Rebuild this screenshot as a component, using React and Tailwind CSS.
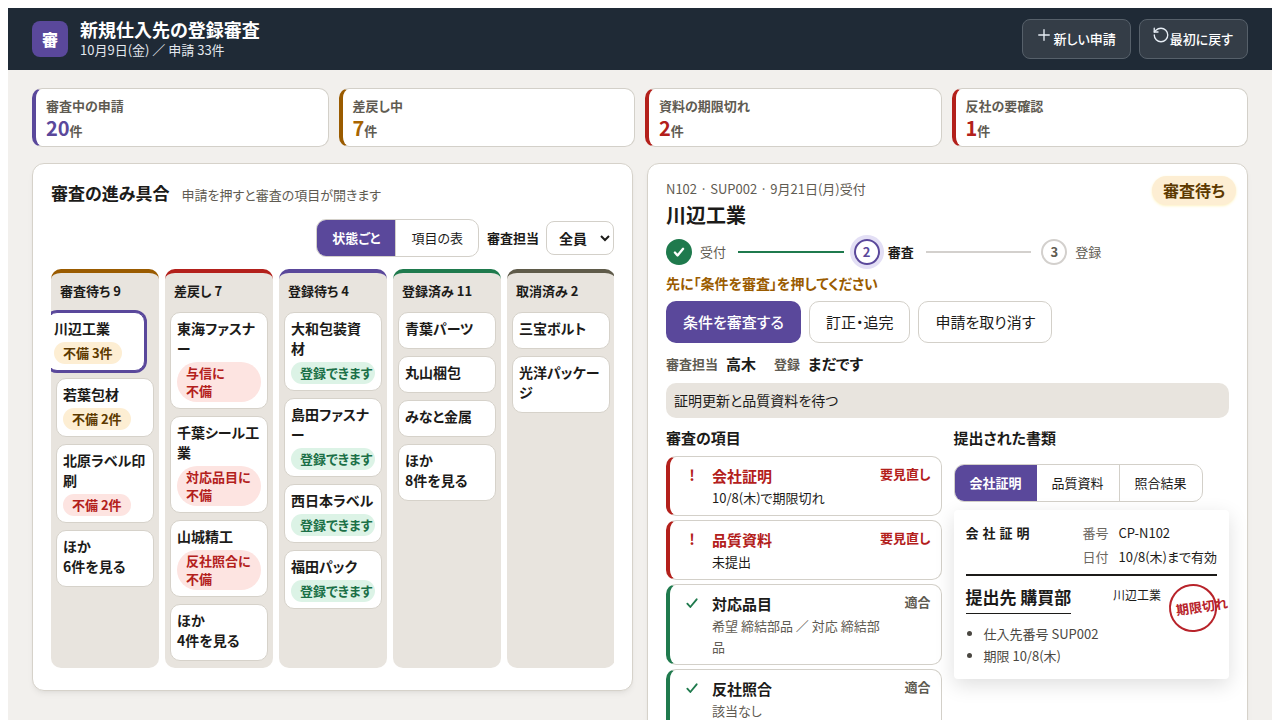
import React from "react";
import { Plus, RotateCcw } from "lucide-react";

const stats = [
  { label: "審査中の申請", value: 20, edge: "border-l-[#5a489b]", tone: "text-[#5a489b]" },
  { label: "差戻し中", value: 7, edge: "border-l-[#9a5b00]", tone: "text-[#a86400]" },
  { label: "資料の期限切れ", value: 2, edge: "border-l-[#b3201b]", tone: "text-[#b3201b]" },
  { label: "反社の要確認", value: 1, edge: "border-l-[#b3201b]", tone: "text-[#b3201b]" },
];

const columns = [
  {
    title: "審査待ち",
    count: 9,
    edge: "border-t-[#9a5b00]",
    cards: [
      { name: "川辺工業", tag: ["不備 3件"], tone: "amber", selected: true },
      { name: "若葉包材", tag: ["不備 2件"], tone: "amber" },
      { name: "北原ラベル印刷", tag: ["不備 2件"], tone: "red" },
      { more: 6 },
    ],
  },
  {
    title: "差戻し",
    count: 7,
    edge: "border-t-[#b3201b]",
    cards: [
      { name: "東海ファスナー", tag: ["与信に", "不備"], tone: "red" },
      { name: "千葉シール工業", tag: ["対応品目に", "不備"], tone: "red" },
      { name: "山城精工", tag: ["反社照合に", "不備"], tone: "red" },
      { more: 4 },
    ],
  },
  {
    title: "登録待ち",
    count: 4,
    edge: "border-t-[#5a489b]",
    cards: [
      { name: "大和包装資材", tag: ["登録できます"], tone: "green" },
      { name: "島田ファスナー", tag: ["登録できます"], tone: "green" },
      { name: "西日本ラベル", tag: ["登録できます"], tone: "green" },
      { name: "福田パック", tag: ["登録できます"], tone: "green" },
    ],
  },
  {
    title: "登録済み",
    count: 11,
    edge: "border-t-[#1f7a4d]",
    cards: [{ name: "青葉パーツ" }, { name: "丸山梱包" }, { name: "みなと金属" }, { more: 8 }],
  },
  {
    title: "取消済み",
    count: 2,
    edge: "border-t-[#5f5b4a]",
    cards: [{ name: "三宝ボルト" }, { name: "光洋パッケージ" }],
  },
];

const tagTones = {
  amber: "bg-[#fdeed3] text-[#5c3900]",
  red: "bg-[#fde4e1] text-[#b3201b]",
  green: "bg-[#dcf3e6] text-[#1b7047]",
};

const checks = [
  { name: "会社証明", note: "10/8(木)で期限切れ", ok: false },
  { name: "品質資料", note: "未提出", ok: false },
  { name: "対応品目", note: "希望 締結部品 ／ 対応 締結部品", ok: true },
  { name: "反社照合", note: "該当なし", ok: true },
];

function Tick({ className, strokeWidth }) {
  return (
    <svg
      viewBox="0 0 24 24"
      fill="none"
      stroke="currentColor"
      strokeWidth={strokeWidth}
      strokeLinecap="round"
      strokeLinejoin="round"
      className={className}
      aria-hidden="true"
    >
      <path d="M5 13l4.5 5L19 6.5" />
    </svg>
  );
}

function TopButton({ icon: Icon, children }) {
  return (
    <button
      type="button"
      className="flex h-10 items-center rounded-lg border border-[#56606a] bg-[#343d47] pr-[14px] pl-3 text-[13px] font-medium text-white"
    >
      <Icon size={18} strokeWidth={1.8} className="mb-2 text-[#e6edf5]" aria-hidden="true" />
      {children}
    </button>
  );
}

function Stat({ label, value, edge, tone }) {
  return (
    <div className={`rounded-[10px] border border-l-4 border-[#d3d0c9] bg-white px-[10px] py-[6px] ${edge}`}>
      <div className="text-[13px] leading-[21px] font-bold text-[#5f5b52]">{label}</div>
      <div className="flex h-6 items-baseline text-[13px] leading-6 font-bold text-[#5f5b52]">
        <span className={`text-[20px] leading-6 ${tone}`}>{value}</span>件
      </div>
    </div>
  );
}

function BoardCard({ card }) {
  const frame = card.selected
    ? "-ml-[9px] mr-[9px] border-[#5a489b] ring-2 ring-[#5a489b]"
    : "border-[#d6d2ca]";
  return (
    <button
      type="button"
      className={`block rounded-[10px] border bg-white px-[6px] pt-[5px] pb-[6px] text-left ${frame}`}
    >
      <span className="mb-1 block pr-px text-[14px] leading-5 font-bold break-all">
        {card.more ? (
          <>
            ほか
            <br />
            {card.more}件を見る
          </>
        ) : (
          card.name
        )}
      </span>
      {card.tag && (
        <span
          className={`block max-w-full rounded-[20px] px-[9px] py-[2px] text-[13px] leading-[18px] font-bold ${
            card.tag.length > 1 ? "w-full" : "w-fit"
          } ${tagTones[card.tone]}`}
        >
          {card.tag.map((part) => (
            <span key={part} className="block whitespace-nowrap">
              {part}
            </span>
          ))}
        </span>
      )}
    </button>
  );
}

function Board() {
  return (
    <section className="rounded-xl border border-[#d6d2ca] bg-white px-[18px] pt-[17px] pb-[22px] shadow-md shadow-black/5">
      <div className="flex items-baseline gap-3">
        <h2 className="text-[17px] leading-6 font-bold">審査の進み具合</h2>
        <p className="text-[13px] leading-6 text-[#5f5b52]">申請を押すと審査の項目が開きます</p>
      </div>
      <div className="mt-3 flex items-center justify-end">
        <div className="flex h-[38px] overflow-hidden rounded-[10px] border border-[#d3d0c9] text-[13px]">
          <button type="button" className="bg-[#5a489b] px-[15px] font-bold text-white">
            状態ごと
          </button>
          <button type="button" className="border-l border-[#d3d0c9] px-[15px]">
            項目の表
          </button>
        </div>
        <label htmlFor="owner" className="ml-2 text-[13px] font-bold">
          審査担当
        </label>
        <select
          id="owner"
          className="ml-[7px] h-[34px] w-[68px] rounded-lg border border-[#d3d0c9] bg-white pl-2 text-[14px] font-bold"
        >
          <option>全員</option>
        </select>
      </div>
      <div className="mt-3 grid grid-cols-[repeat(5,minmax(108px,1fr))] gap-[6px] overflow-hidden">
        {columns.map((col) => (
          <div
            key={col.title}
            className={`flex min-w-0 flex-col gap-[7px] rounded-[10px] border-t-4 bg-[#e8e4de] px-[5px] pb-[7px] ${col.edge}`}
          >
            <h3 className="px-1 pt-2 pb-1 text-[13px] leading-5 font-bold">
              {col.title} {col.count}
            </h3>
            {col.cards.map((card, i) => (
              <BoardCard key={i} card={card} />
            ))}
          </div>
        ))}
      </div>
    </section>
  );
}

function Step({ mark, label, circle, line, active }) {
  return (
    <li className="flex items-center">
      <span
        className={`flex size-[26px] shrink-0 items-center justify-center rounded-full border-2 text-[13px] leading-4 font-bold ${circle}`}
      >
        {mark}
      </span>
      <span className={`ml-2 text-[13px] leading-5 whitespace-nowrap ${active ? "font-bold" : "text-[#5f5b52]"}`}>
        {label}
      </span>
      {line && <span className={`mr-[10px] ml-3 h-[2px] flex-1 ${line}`} />}
    </li>
  );
}

function CheckRow({ name, note, ok }) {
  return (
    <li
      className={`flex rounded-[10px] border border-l-4 border-[#d3d0c9] bg-white py-[7px] pr-[10px] ${
        ok ? "border-l-[#1f7a4d]" : "border-l-[#b3201b]"
      }`}
    >
      <span className="flex h-[22px] w-[42px] shrink-0 items-center justify-center pl-[2px] text-[15px] font-bold text-[#b3201b]">
        {ok ? <Tick strokeWidth={2.8} className="size-4 text-[#1f7a4d]" /> : "!"}
      </span>
      <div className="min-w-0 flex-1 pr-5">
        <div className={`text-[15px] leading-[23px] font-bold ${ok ? "" : "text-[#b3201b]"}`}>{name}</div>
        <div className={`text-[13px] leading-[21px] ${ok ? "text-[#5f5b52]" : ""}`}>{note}</div>
      </div>
      <span className={`text-[13px] leading-5 font-bold ${ok ? "text-[#5f5b52]" : "text-[#b3201b]"}`}>
        {ok ? "適合" : "要見直し"}
      </span>
    </li>
  );
}

function Document() {
  return (
    <article className="mt-2 rounded-[4px] bg-white p-3 shadow-[0_6px_20px_rgba(0,0,0,0.13)]">
      <div className="flex justify-between border-b-2 border-[#1c1b19] pb-[6px]">
        <h4 className="text-[13px] leading-[22px] font-bold tracking-[4px]">会社証明</h4>
        <dl className="grid grid-cols-[auto_auto] gap-x-[10px] gap-y-[2px] text-[13px] leading-[22px]">
          <dt className="text-[#6b675f]">番号</dt>
          <dd>CP-N102</dd>
          <dt className="text-[#6b675f]">日付</dt>
          <dd>10/8(木)まで有効</dd>
        </dl>
      </div>
      <div className="mt-2 flex items-start">
        <p className="border-b border-[#1c1b19] pb-1 text-[17px] leading-[25px] font-bold">提出先 購買部</p>
        <p className="mr-2 ml-auto text-[12px] leading-[22px]">川辺工業</p>
        <div className="flex size-12 -rotate-8 items-center rounded-full border-2 border-[#b8232a] pl-[5px] text-[13px] font-bold whitespace-nowrap text-[#b8232a]">
          期限切れ
        </div>
      </div>
      <ul className="-mt-[9px] list-disc pl-[18px] text-[13px] leading-[22px] text-[#4a4741]">
        <li>仕入先番号 SUP002</li>
        <li>期限 10/8(木)</li>
      </ul>
    </article>
  );
}

function Detail() {
  return (
    <section className="relative rounded-xl border border-[#d6d2ca] bg-white px-[18px] pt-[14px] pb-6 shadow-md shadow-black/5">
      <span className="absolute top-3 right-[11px] rounded-full bg-[#fdeed3] px-[11px] text-[16px] leading-[29px] font-bold text-[#5c3900] shadow-sm shadow-amber-100">
        審査待ち
      </span>
      <p className="text-[13px] leading-[22px] text-[#5f5b52]">N102 · SUP002 · 9月21日(月)受付</p>
      <h2 className="text-[20px] leading-[30px] font-bold">川辺工業</h2>
      <ol className="mt-[9px] grid grid-cols-3">
        <Step
          mark={<Tick strokeWidth={4} className="size-[14px]" />}
          label="受付"
          circle="border-[#1f7a4d] bg-[#1f7a4d] text-white"
          line="bg-[#1f7a4d]"
        />
        <Step
          mark="2"
          label="審査"
          active
          circle="border-[#5a489b] text-[#5a489b] ring-4 ring-[#e3dff5]"
          line="bg-[#d3d0cd]"
        />
        <Step mark="3" label="登録" circle="border-[#d3d0cd] text-[#5f5b52]" />
      </ol>
      <p className="mt-[7px] text-[14px] leading-[22px] font-bold text-[#9a5b00]">
        先に「条件を審査」を押してください
      </p>
      <div className="mt-[7px] flex gap-2 text-[15px]">
        <button type="button" className="h-[42px] rounded-[10px] bg-[#5a489b] px-[17px] font-medium text-white">
          条件を審査する
        </button>
        <button type="button" className="h-[42px] rounded-[10px] border border-[#d3d0c9] px-4">
          訂正・追完
        </button>
        <button type="button" className="h-[42px] rounded-[10px] border border-[#d3d0c9] px-4">
          申請を取り消す
        </button>
      </div>
      <dl className="mt-[9px] flex items-center gap-2 leading-6 font-bold">
        <dt className="text-[13px] text-[#5f5b52]">審査担当</dt>
        <dd className="mr-[10px] text-[15px]">高木</dd>
        <dt className="text-[13px] text-[#5f5b52]">登録</dt>
        <dd className="text-[15px]">まだです</dd>
      </dl>
      <p className="mt-[7px] rounded-[10px] bg-[#e8e4de] px-2 text-[14px] leading-[35px]">証明更新と品質資料を待つ</p>
      <div className="mt-2 grid grid-cols-2 gap-3">
        <div>
          <h3 className="text-[15px] leading-6 font-bold">審査の項目</h3>
          <ul className="mt-[6px] flex flex-col gap-1">
            {checks.map((c) => (
              <CheckRow key={c.name} {...c} />
            ))}
          </ul>
        </div>
        <div>
          <h3 className="text-[15px] leading-6 font-bold">提出された書類</h3>
          <div className="mt-[14px] flex h-[38px] w-fit overflow-hidden rounded-[10px] border border-[#d3d0c9] text-[13px]">
            <button type="button" className="bg-[#5a489b] px-[15px] font-bold text-white">
              会社証明
            </button>
            <button type="button" className="px-[15px]">
              品質資料
            </button>
            <button type="button" className="border-l border-[#d3d0c9] px-[15px]">
              照合結果
            </button>
          </div>
          <Document />
        </div>
      </div>
    </section>
  );
}

export default function App() {
  return (
    <div className="h-screen overflow-hidden bg-white px-2 pt-2 font-['Noto_Sans_CJK_JP',sans-serif] text-[#1c1b19] [font-feature-settings:'palt']">
      <div className="min-h-screen bg-[#f2f0ed]">
        <header className="flex h-[62px] items-center gap-2 bg-[#1f2a36] px-6 text-white">
          <div className="flex size-9 items-center justify-center rounded-lg bg-[#5a489b] text-[16px] font-black">
            審
          </div>
          <div className="mr-auto ml-1 pb-[3px]">
            <h1 className="text-[18px] leading-6 font-bold">新規仕入先の登録審査</h1>
            <p className="text-[13px] leading-[18px] text-[#e3e8ee]">10月9日(金) ／ 申請 33件</p>
          </div>
          <TopButton icon={Plus}>新しい申請</TopButton>
          <TopButton icon={RotateCcw}>最初に戻す</TopButton>
        </header>
        <main className="px-6 pt-[18px]">
          <div className="grid grid-cols-4 gap-[10px]">
            {stats.map((s) => (
              <Stat key={s.label} {...s} />
            ))}
          </div>
          <div className="mt-4 grid grid-cols-2 items-start gap-[14px]">
            <Board />
            <Detail />
          </div>
        </main>
      </div>
    </div>
  );
}
